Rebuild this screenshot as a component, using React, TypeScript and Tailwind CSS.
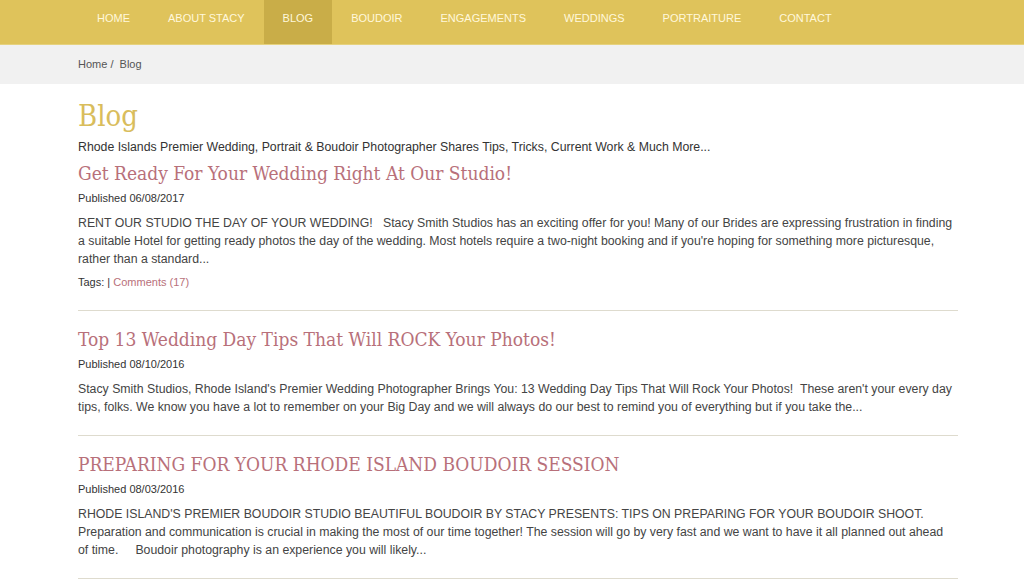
const navItems = [
  "HOME",
  "ABOUT STACY",
  "BLOG",
  "BOUDOIR",
  "ENGAGEMENTS",
  "WEDDINGS",
  "PORTRAITURE",
  "CONTACT",
];

type Post = {
  title: string;
  date: string;
  body: string;
  tags?: boolean;
};

const posts: Post[] = [
  {
    title: "Get Ready For Your Wedding Right At Our Studio!",
    date: "06/08/2017",
    body: "RENT OUR STUDIO THE DAY OF YOUR WEDDING!\u00a0\u00a0 Stacy Smith Studios has an exciting offer for you! Many of our Brides are expressing frustration in finding a suitable Hotel for getting ready photos the day of the wedding. Most hotels require a two-night booking and if you're hoping for something more picturesque, rather than a standard...",
    tags: true,
  },
  {
    title: "Top 13 Wedding Day Tips That Will ROCK Your Photos!",
    date: "08/10/2016",
    body: "Stacy Smith Studios, Rhode Island's Premier Wedding Photographer Brings You: 13 Wedding Day Tips That Will Rock Your Photos!\u00a0 These aren't your every day tips, folks. We know you have a lot to remember on your Big Day and we will always do our best to remind you of everything but if you take the...",
  },
  {
    title: "PREPARING FOR YOUR RHODE ISLAND BOUDOIR SESSION",
    date: "08/03/2016",
    body: "RHODE ISLAND'S PREMIER BOUDOIR STUDIO BEAUTIFUL BOUDOIR BY STACY PRESENTS: TIPS ON PREPARING FOR YOUR BOUDOIR SHOOT. Preparation and communication is crucial in making the most of our time together! The session will go by very fast and we want to have it all planned out ahead of time.\u00a0\u00a0\u00a0\u00a0 Boudoir photography is an experience you will likely...",
  },
];

const slab = "font-['DejaVu_Serif_Condensed','DejaVu_Serif',serif]";

export default function App() {
  return (
    <div className="min-h-screen bg-white font-['Liberation_Sans',Arial,sans-serif] text-[#333]">
      {/* Top nav */}
      <nav className="h-[45px] bg-[#dfc35b] border-b border-[#e6d27e]">
        <ul className="ml-[78px] flex h-full">
          {navItems.map((item) => (
            <li
              key={item}
              className={
                item === "BLOG"
                  ? "pt-[11px] px-[19px] bg-[#c9ad48] text-[11px] leading-[14px] text-[#fff8dc]"
                  : "pt-[11px] px-[19px] text-[11px] leading-[14px] text-[#fff8dc]"
              }
            >
              {item}
            </li>
          ))}
        </ul>
      </nav>

      {/* Breadcrumb */}
      <div className="h-[39px] bg-[#f1f1f1] flex items-center">
        <div className="ml-[78px] text-[11px] text-[#555]">
          Home /&nbsp; Blog
        </div>
      </div>

      {/* Content */}
      <main className="ml-[78px] w-[880px] pt-[14px]">
        <h1 className={`${slab} text-[29px] leading-[36px] text-[#d9bd5c]`}>
          Blog
        </h1>
        <p className="mt-[4px] text-[12.3px] leading-[18px]">
          Rhode Islands Premier Wedding, Portrait &amp; Boudoir Photographer
          Shares Tips, Tricks, Current Work &amp; Much More...
        </p>

        {posts.map((post, i) => (
          <article
            key={post.title}
            className={i === 0 ? "pt-[4px]" : "pt-[15px]"}
          >
            <h2 className={`${slab} text-[19px] leading-[26px] text-[#b8707a]`}>
              {post.title}
            </h2>
            <p className="mt-[5px] text-[11px] leading-[14px]">
              Published {post.date}
            </p>
            <p className="mt-[9px] w-[877px] text-[12.3px] leading-[18px] text-[#444]">
              {post.body}
            </p>
            {post.tags && (
              <p className="mt-[7px] text-[11px] leading-[14px]">
                Tags: |{" "}
                <span className="text-[#b8707a]">Comments (17)</span>
              </p>
            )}
            <hr
              className={
                post.tags
                  ? "mt-[21px] border-t border-[#dedbce]"
                  : "mt-[19px] border-t border-[#dedbce]"
              }
            />
          </article>
        ))}
      </main>
    </div>
  );
}
